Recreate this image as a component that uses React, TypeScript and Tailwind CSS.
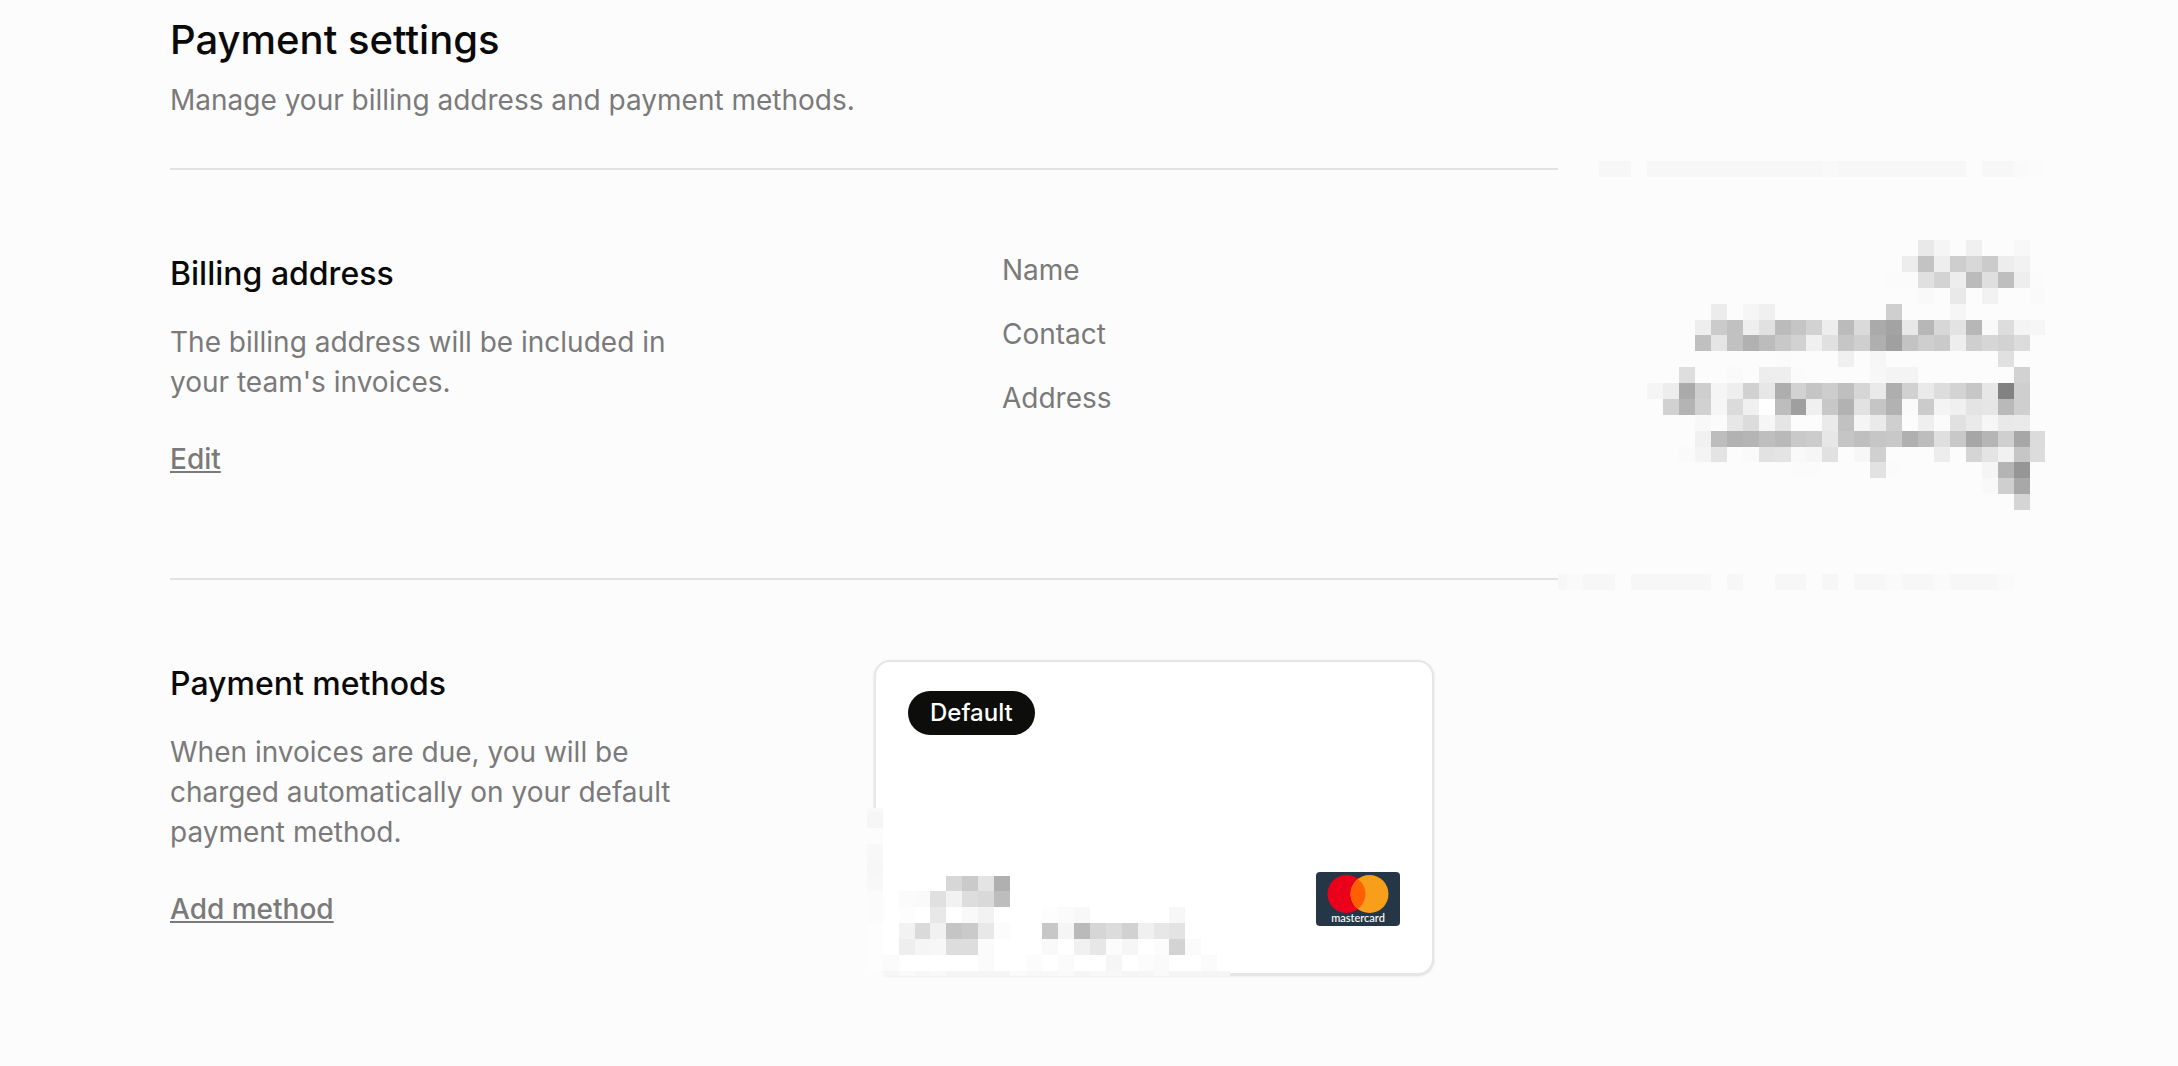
import React from "react";

type Run = [number, string];
type Rect = { x: number; y: number; w: number; h: number; fill: string };

/* Each row is a list of runs: a start column and grey levels as hex pairs ("--" leaves the ground bare). */
function cells(rows: Run[][], xs: number[], ys: number[]): Rect[] {
  const out: Rect[] = [];
  rows.forEach((runs, r) =>
    runs.forEach(([start, levels]) =>
      levels.split(" ").forEach((level, i) => {
        if (level === "--") return;
        const c = start + i;
        out.push({
          x: xs[c],
          y: ys[r],
          w: xs[c + 1] - xs[c],
          h: ys[r + 1] - ys[r],
          fill: `#${level}${level}${level}`,
        });
      }),
    ),
  );
  return out;
}

const addressXs = [
  0, 9, 25, 41, 57, 73, 89, 105, 121, 137, 153, 169, 185, 201, 217, 233, 248, 264, 280, 296, 312, 328, 344, 360, 376,
  392, 408, 424, 440, 456, 472, 487,
];
const addressYs = [
  0, 16, 79, 95, 111, 127, 143, 159, 174, 190, 206, 222, 238, 254, 270, 286, 301, 317, 333, 349, 413, 429,
];
const addressRows: Run[][] = [
  [[3, "f7 f7"], [6, "f7 f7 f7 f7 f7 f7 f7 f7 f7 f7 f7 f9 f7 f7 f7 f7 f7 f7 f7 f7"], [27, "f7 f7 fa fb"]],
  [],
  [[23, "e9 f5 -- f0 -- -- f8"]],
  [[22, "ed c3 ee ce d8 cb ed f2"]],
  [[21, "fb fb e0 d3 ed bb df be ee fb"]],
  [[23, "f9 -- e9 -- f2 -- -- fa"]],
  [[10, "ec -- f6 f0"], [21, "cf"], [25, "f6"]],
  [[9, "ee cb c1 ee e1 bb c5 d2 ed bb da aa a3 e8 b7 d7 e3 b7 f9 dd f4 f6"]],
  [[9, "c0 e5 c1 b1 bc c8 d2 f0 e0 c6 cf af a0 c3 ce ca ee cf d6 d2 dc"]],
  [[14, "fb"], [18, "f0 -- f6"], [28, "e0"]],
  [[8, "de -- -- fa -- ed ee fb"], [20, "f7 f4 f4"], [29, "d2"]],
  [[6, "f5 ed aa ce f5 ee d1 e7 ae d2 c5 cd bf d6 ea ae d1 ea dd d3 c7 e7 82 cf"]],
  [[7, "d1 b4 d1 f6 db f0 ff bd 9f f0 c7 b2 e2 c5 b2 fa cb f4 f0 e4 e6 b9 cf"]],
  [[9, "f8 fb e7 dc f6 e5 -- -- ea c1 f5 ea cf -- ef fb e1 ea f6 e9 ea"]],
  [[9, "f1 bd b2 b5 be b9 c9 cc e7 c5 bf c6 c8 b0 bd df c8 a6 b5 cf a7 db"]],
  [[8, "fa f4 e4 -- fa e2 e4 f9 f6 e1 -- f7 d0 -- -- -- ed -- d5 e4 f1 c6 dc"]],
  [[15, "fb fb"], [20, "e2 fb"], [27, "f5 b4 96"]],
  [[27, "f9 cf a8"]],
  [[29, "d5"]],
  [],
  [
    [0, "f7 fa f7 f7"],
    [5, "f7 f7 f7 f7 f7 -- f7 -- -- f7 f7 -- f7 -- f7 f7 fa f7 f7 fa f7 f7 f7 fa"],
  ],
];

const cardXs = [
  0, 16, 32, 48, 63, 79, 95, 111, 127, 143, 159, 175, 191, 207, 223, 239, 255, 271, 287, 302, 318, 334, 350, 363,
];
const cardYs = [0, 4, 20, 36, 52, 68, 83, 99, 115, 131, 147, 163, 168];
const cardRows: Run[][] = [
  [[0, "f9"]],
  [[0, "f6"]],
  [[0, "fc"]],
  [[0, "f8"]],
  [[0, "f7"]],
  [[0, "f8"], [5, "d7 ca e4 b0"]],
  [[0, "fb -- fb fa e0 f2 dd d9 bd"]],
  [[0, "fb -- fd -- e8 -- f9 f2"], [11, "fd fb f8"], [19, "f7"]],
  [[0, "fd -- f2 da f1 c5 ca e8 fc"], [11, "c7 f5 ba d6 dc d1 f0 e7 e3"]],
  [[0, "fd -- ee f5 f7 dd dd fb"], [11, "f9 -- f1 e7 fc f6 -- fc d3 fb"]],
  [[0, "fd fb -- -- -- -- -- fb -- -- fc -- fb -- -- f6 -- fc fa -- -- fb"]],
  [[0, "fc f6 fa f7 f9 f5 f5 f5 f5 fb f8 f8 fa f5 f8 f8 f5 f6 fa f5 f5 f5 f5"]],
];

const addressCells = cells(addressRows, addressXs, addressYs);
const cardCells = cells(cardRows, cardXs, cardYs);

function Cells({ items }: { items: Rect[] }) {
  return (
    <>
      {items.map((c) => (
        <rect key={`${c.x}-${c.y}`} x={c.x} y={c.y} width={c.w} height={c.h} fill={c.fill} />
      ))}
    </>
  );
}

function MastercardLogo() {
  return (
    <svg width="84" height="54" viewBox="0 0 84 54" role="img" aria-label="Mastercard">
      <rect width="84" height="54" rx="4" fill="#253747" />
      <circle cx="30.5" cy="22" r="19" fill="#eb001b" />
      <circle cx="53.5" cy="22" r="19" fill="#f79e1b" />
      <path d="M42 6.9a19 19 0 0 1 0 30.200a19 19 0 0 1 0-30.200z" fill="#ff5f00" />
      <text
        x="42"
        y="50"
        textAnchor="middle"
        fontSize="11"
        fontWeight="500"
        fill="#fff"
        fontFamily="Lato, sans-serif"
      >
        mastercard
      </text>
    </svg>
  );
}

function SectionIntro({ title, text, action }: { title: string; text: string; action: string }) {
  return (
    <div className="w-[704px] shrink-0">
      <h2 className="text-[32px] leading-[48px] font-medium text-[#0a0a0a]">{title}</h2>
      <p className="mt-6 max-w-[512px]">{text}</p>
      <button type="button" className="mt-[37px] block font-medium underline decoration-2 underline-offset-2">
        {action}
      </button>
    </div>
  );
}

export default function App() {
  return (
    <main className="min-h-screen bg-[#fcfcfc] pt-3 pr-[133px] pl-[170px] font-['Inter',sans-serif] text-[28px] leading-10 text-[#7a7a7a] [font-optical-sizing:none]">
      <header className="pb-12">
        <h1 className="text-[40px] leading-[56px] font-medium text-[#0a0a0a]">Payment settings</h1>
        <p className="mt-3">Manage your billing address and payment methods.</p>
      </header>

      <section className="relative flex border-t-2 border-[#e2e2e2] pt-20 pb-[99px]">
        <SectionIntro
          title="Billing address"
          text="The billing address will be included in your team's invoices."
          action="Edit"
        />
        <ul className="ml-32 flex flex-col gap-6">
          <li>Name</li>
          <li>Contact</li>
          <li>Address</li>
        </ul>
        <svg
          className="absolute -top-[9px] right-0 z-10"
          width="487"
          height="429"
          role="img"
          aria-label="Hidden billing details"
          shapeRendering="crispEdges"
        >
          <rect width="487" height="429" fill="#fcfcfc" />
          <Cells items={addressCells} />
        </svg>
      </section>

      <section className="flex border-t-2 border-[#e2e2e2] pt-20 pb-[87px]">
        <SectionIntro
          title="Payment methods"
          text="When invoices are due, you will be charged automatically on your default payment method."
          action="Add method"
        />
        <article className="relative flex h-[315px] w-[560px] flex-col justify-between rounded-2xl border-2 border-[#e6e6e6] bg-white px-8 pt-[29px] pb-[47px] shadow-sm">
          <span className="self-start rounded-full bg-[#0d0d0b] px-[22px] text-2xl leading-[44px] font-medium text-white">
            Default
          </span>
          <div className="self-end">
            <MastercardLogo />
          </div>
          <svg
            className="absolute -bottom-[3px] -left-[9px]"
            width="363"
            height="168"
            role="img"
            aria-label="Hidden card details"
            shapeRendering="crispEdges"
          >
            <rect width="16" height="168" fill="#fdfdfd" />
            <rect x="16" width="347" height="168" fill="#fff" />
            <Cells items={cardCells} />
          </svg>
        </article>
      </section>
    </main>
  );
}
